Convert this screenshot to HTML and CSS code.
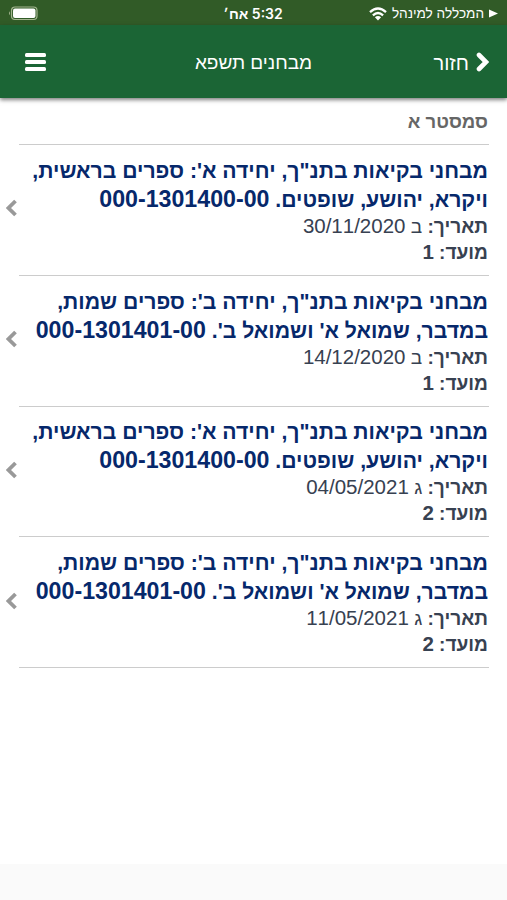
FILE: index.html
```
<!DOCTYPE html>
<html lang="he" dir="rtl">
<head>
    <meta charset="UTF-8">
    <meta name="viewport" content="width=device-width, initial-scale=1.0">
    <title>מבחנים תשפא</title>
    <link rel="stylesheet" href="styles.css">
</head>
<body>
    <div class="status-bar">
        <div class="carrier">
            <svg class="play" width="10" height="9" viewBox="0 0 10 9"><path d="M0 0l10 4.500l-10 4.500z" fill="#fff"/></svg>
            <span class="carrier-name">המכללה למינהל</span>
            <svg class="wifi" width="18" height="14" viewBox="0 0 18 14" fill="none" stroke="#fff" stroke-width="2.300">
                <path d="M1 5.200Q9-2.200 17 5.200M3.900 8.300Q9 3.600 14.100 8.300"/>
                <path d="M5.900 10.200Q9 7.600 12.100 10.200L9 13.400z" fill="#fff" stroke="none"/>
            </svg>
        </div>
        <span class="clock"><span>5:32</span> <span>אח׳</span></span>
        <svg class="battery" width="30" height="15" viewBox="0 0 30 15">
            <rect x="3.500" y="1" width="25.500" height="12.500" rx="3.500" fill="none" stroke="#a3b58f" stroke-width="1.200"/>
            <rect x="5" y="2.600" width="22.500" height="9.400" rx="2" fill="#fff"/>
            <path d="M2 5.200Q0 7.200 2 9.200z" fill="#a3b58f"/>
        </svg>
    </div>
    <header>
        <button class="back">
            <svg width="13" height="20" viewBox="0 0 13 20"><path d="M3 3l7 7l-7 7" fill="none" stroke="#fff" stroke-width="4.600" stroke-linecap="round"/></svg>
            <span class="back-text">חזור</span>
        </button>
        <h1>מבחנים תשפא</h1>
        <button class="menu">
            <svg width="21" height="18" viewBox="0 0 21 18" fill="#fff">
                <rect width="21" height="4" rx="1.500"/>
                <rect y="7" width="21" height="4" rx="1.500"/>
                <rect y="14" width="21" height="4" rx="1.500"/>
            </svg>
        </button>
    </header>
    <main>
        <h2><span>סמסטר א</span></h2>
        <ul class="exams">
            <li class="exam">
                <div class="exam-info">
                    <h3>מבחני בקיאות בתנ"ך, יחידה א': ספרים בראשית, ויקרא, יהושע, שופטים. <span class="code">000-1301400-00</span></h3>
                    <p><b>תאריך:</b> ב <span class="date">30/11/2020</span></p>
                    <p><b>מועד: <span class="date">1</span></b></p>
                </div>
                <svg class="arrow" width="12" height="18" viewBox="0 0 12 18"><path d="M9.500 2l-7 7l7 7" fill="none" stroke="#999" stroke-width="3.800"/></svg>
            </li>
            <li class="exam">
                <div class="exam-info">
                    <h3>מבחני בקיאות בתנ"ך, יחידה ב': ספרים שמות, במדבר, שמואל א' ושמואל ב'. <span class="code">000-1301401-00</span></h3>
                    <p><b>תאריך:</b> ב <span class="date">14/12/2020</span></p>
                    <p><b>מועד: <span class="date">1</span></b></p>
                </div>
                <svg class="arrow" width="12" height="18" viewBox="0 0 12 18"><path d="M9.500 2l-7 7l7 7" fill="none" stroke="#999" stroke-width="3.800"/></svg>
            </li>
            <li class="exam">
                <div class="exam-info">
                    <h3>מבחני בקיאות בתנ"ך, יחידה א': ספרים בראשית, ויקרא, יהושע, שופטים. <span class="code">000-1301400-00</span></h3>
                    <p><b>תאריך:</b> ג <span class="date">04/05/2021</span></p>
                    <p><b>מועד: <span class="date">2</span></b></p>
                </div>
                <svg class="arrow" width="12" height="18" viewBox="0 0 12 18"><path d="M9.500 2l-7 7l7 7" fill="none" stroke="#999" stroke-width="3.800"/></svg>
            </li>
            <li class="exam">
                <div class="exam-info">
                    <h3>מבחני בקיאות בתנ"ך, יחידה ב': ספרים שמות, במדבר, שמואל א' ושמואל ב'. <span class="code">000-1301401-00</span></h3>
                    <p><b>תאריך:</b> ג <span class="date">11/05/2021</span></p>
                    <p><b>מועד: <span class="date">2</span></b></p>
                </div>
                <svg class="arrow" width="12" height="18" viewBox="0 0 12 18"><path d="M9.500 2l-7 7l7 7" fill="none" stroke="#999" stroke-width="3.800"/></svg>
            </li>
        </ul>
    </main>
    <footer></footer>
</body>
</html>
```
FILE: styles.css
```
* {
    box-sizing: border-box;
}

body {
    display: flex;
    flex-direction: column;
    height: 900px;
    margin: 0;
    overflow: hidden;
    font-family: "Liberation Sans", Arial, sans-serif;
    background-color: #fff;
}

h1, h2, h3, p, ul {
    margin: 0;
    padding: 0;
}

svg {
    display: block;
    flex: none;
}

.status-bar {
    display: grid;
    grid-template-columns: 1fr auto 1fr;
    align-items: center;
    height: 25px;
    padding: 2px 9px 0 8px;
    background-color: #315b27;
    color: #fff;
}

.carrier {
    display: flex;
    align-items: center;
    gap: 5px;
    font-size: 13.6px;
}

.play {
    width: 9px;
}

.clock {
    font-family: Inter, "Liberation Sans", sans-serif;
    font-size: 14px;
    font-weight: 600;
}

.battery {
    justify-self: end;
}

header {
    display: grid;
    grid-template-columns: 1fr auto 1fr;
    align-items: center;
    height: 73px;
    padding: 0 18px 0 18px;
    background-color: #1b6535;
    box-shadow: 0 2px 4px rgba(0, 0, 0, 0.5);
    color: #fff;
}

h1 {
    padding-top: 3px;
    font-size: 19px;
    font-weight: normal;
}

button {
    padding: 0;
    border: none;
    background: none;
    color: #fff;
    font-family: inherit;
    font-size: 20px;
    cursor: pointer;
}

.back {
    display: flex;
    align-items: center;
    gap: 7px;
}

.back-text {
    padding-top: 3px;
}

.menu {
    justify-self: end;
    margin-left: 7px;
}

main {
    flex: 1;
    padding: 0 18px 0 19px;
}

h2 {
    height: 47px;
    padding: 12px 1px 0 0;
    border-bottom: 1px solid #ccc;
    color: #666;
    font-size: 18.5px;
    line-height: 23px;
}

.exams {
    list-style: none;
}

.exam {
    display: flex;
    align-items: center;
    height: 130.75px;
    border-bottom: 1px solid #ccc;
}

.exam-info {
    flex: 1;
    padding: 2px 1px 0 0;
    color: #374151;
    font-size: 19.1px;
    line-height: 26px;
}

.exam h3 {
    color: #06286b;
    font-size: 21.2px;
    line-height: 29px;
}

.code {
    font-size: 23.2px;
    line-height: 1;
    white-space: nowrap;
}

.date {
    font-size: 20.5px;
    line-height: 1;
}

.arrow {
    margin: 0 0 3px -13px;
}

footer {
    height: 36px;
    background-color: #fafafa;
}
```
